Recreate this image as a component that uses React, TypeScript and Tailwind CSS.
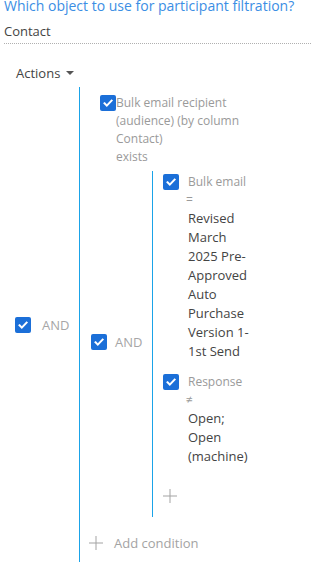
import React from 'react'

const Check = () => (
  <span className="w-[16px] h-[16px] shrink-0 rounded-[2px] bg-[#1b6fd8] flex items-center justify-center">
    <svg width="12" height="12" viewBox="0 0 12 12" fill="none">
      <path d="M2.5 6.3l2.3 2.3L9.6 3.6" stroke="#fff" strokeWidth="2" strokeLinecap="square" />
    </svg>
  </span>
)

const Plus = () => (
  <svg width="14" height="14" viewBox="0 0 14 14" className="shrink-0">
    <path d="M7 0v14M0 7h14" stroke="#a3a3a3" strokeWidth="1" />
  </svg>
)

const Condition = ({ label, op, value }: { label: string; op: string; value: string }) => (
  <div className="flex items-start gap-[9px]">
    <div className="mt-[1px]"><Check /></div>
    <div className="w-[68px]">
      <div className="text-[12px] leading-[18px] text-[#9a9a9a]">{label}</div>
      <div className="text-[12px] leading-[18px] text-[#9a9a9a] -ml-[2px]">{op}</div>
      <div className="text-[13px] leading-[19px] text-[#444]">{value}</div>
    </div>
  </div>
)

export default function App() {
  return (
    <div className="w-[315px] h-[562px] overflow-hidden bg-white font-['Open_Sans',sans-serif]">
      <div className="px-[4px] -mt-[4px] text-[14px] leading-[19px] text-[#3b8ee4] whitespace-nowrap">
        Which object to use for participant filtration?
      </div>
      <div className="mx-[4px] mt-[7px] pb-[3px] border-b border-dotted border-[#b0b0b0] text-[13px] leading-[18px] text-[#444]">
        Contact
      </div>
      <div className="mt-[20px] pl-[16px] flex items-center gap-[6px] text-[13px] leading-[18px] text-[#444]">
        Actions
        <span className="w-0 h-0 border-l-[4px] border-r-[4px] border-t-[4px] border-l-transparent border-r-transparent border-t-[#555]" />
      </div>

      <div className="mt-[5px] flex items-center">
        <div className="w-[79px] pl-[15px] flex items-center gap-[11px]">
          <Check />
          <span className="text-[13px] leading-[18px] text-[#a6a6a6]">AND</span>
        </div>
        <div className="flex-1 border-l border-[#1aa3e8] pb-[11px]">
          <div className="mt-[7px] pl-[20px] flex items-start">
            <div className="mt-[1px]"><Check /></div>
            <div className="w-[140px] text-[12px] leading-[18px] text-[#9a9a9a]">
              Bulk email recipient (audience) (by column Contact)
              <br />
              exists
            </div>
          </div>

          <div className="mt-[5px] flex items-center">
            <div className="w-[72px] pl-[11px] pb-[4px] flex items-center gap-[8px]">
              <Check />
              <span className="text-[13px] leading-[18px] text-[#a6a6a6]">AND</span>
            </div>
            <div className="border-l border-[#1aa3e8] pl-[10px] pt-[2px] pb-[14px]">
              <Condition label="Bulk email" op="=" value="Revised March 2025 Pre-Approved Auto Purchase Version 1-1st Send" />
              <div className="mt-[12px]">
                <Condition label="Response" op="≠" value="Open; Open (machine)" />
              </div>
              <div className="mt-[23px]">
                <Plus />
              </div>
            </div>
          </div>

          <div className="mt-[17px] pl-[9px] flex items-center gap-[11px]">
            <Plus />
            <span className="text-[13px] leading-[18px] text-[#a3a3a3]">Add condition</span>
          </div>
        </div>
      </div>
    </div>
  )
}
